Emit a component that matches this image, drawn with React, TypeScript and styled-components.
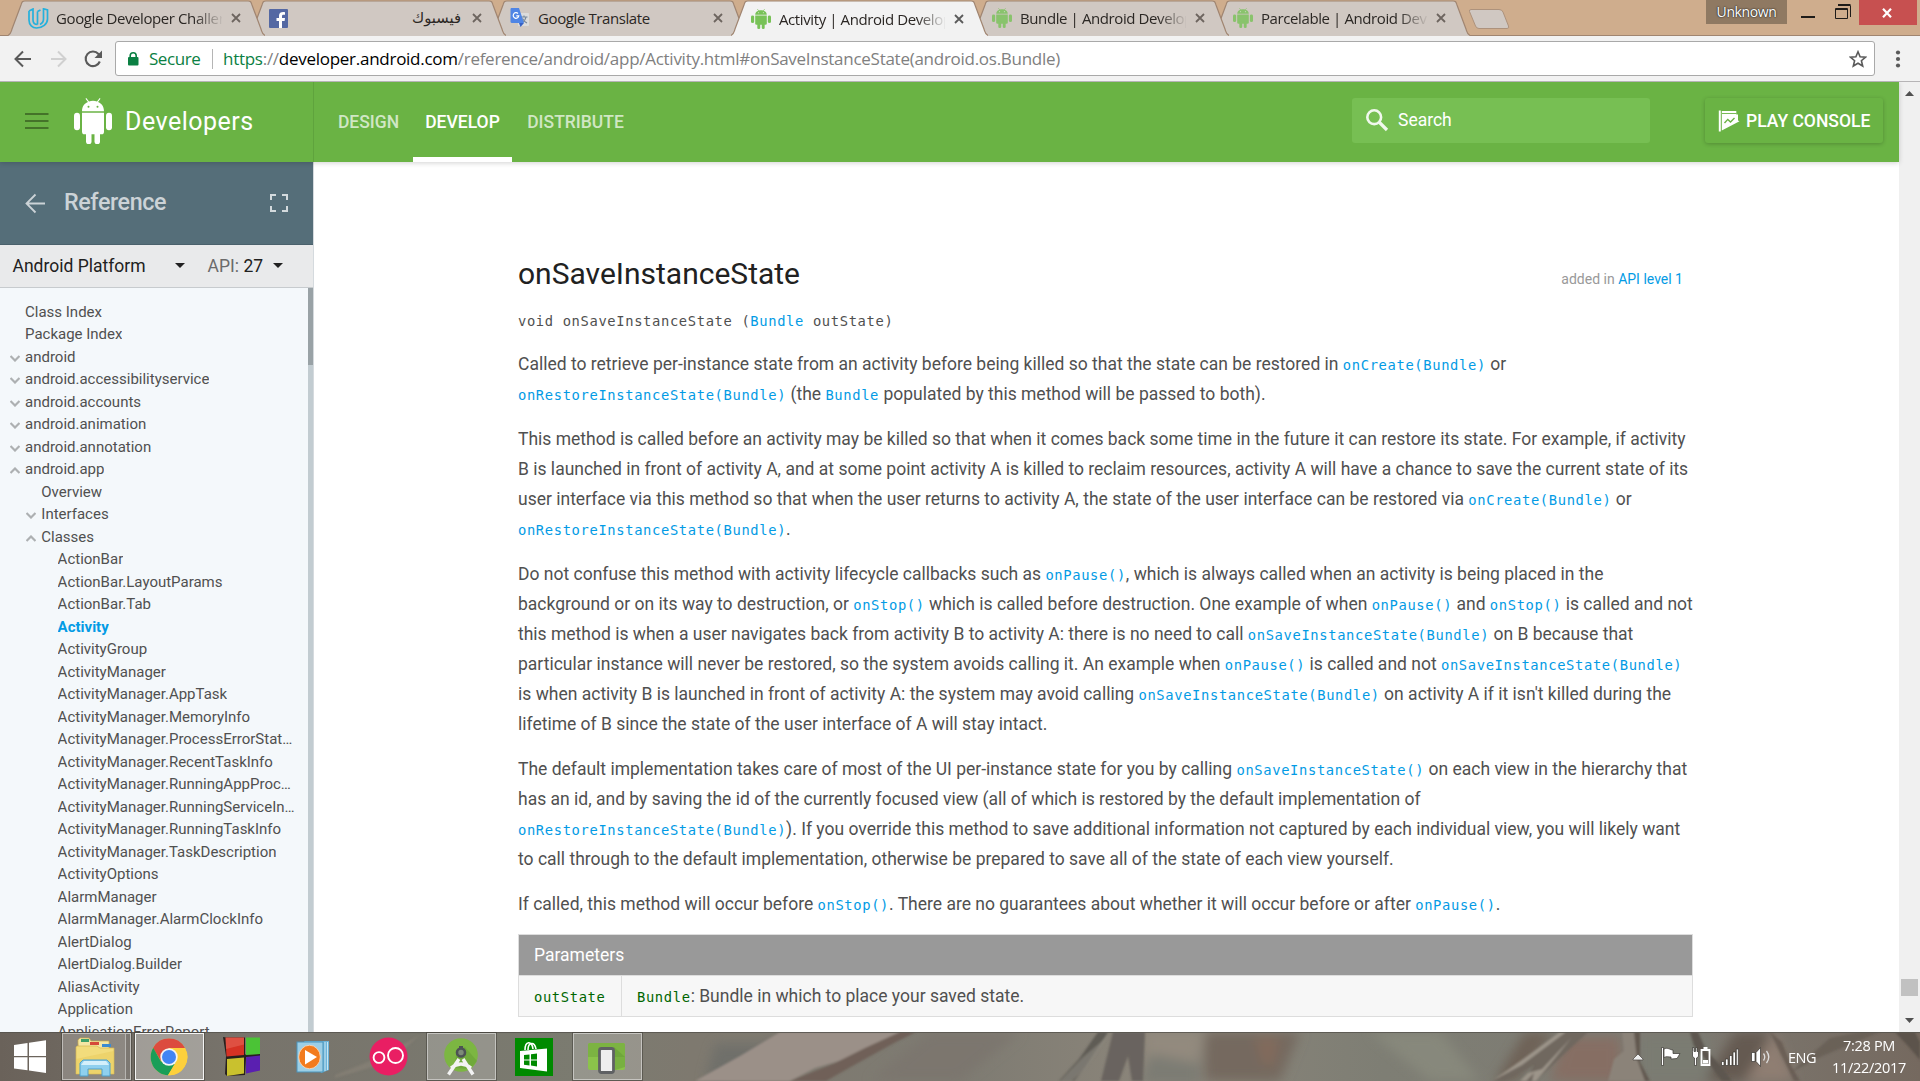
import React from "react";
import styled, { createGlobalStyle, css } from "styled-components";

const ui = `"Open Sans", "Noto Sans", "DejaVu Sans", sans-serif`;
const roboto = `Roboto, "Liberation Sans", sans-serif`;

const GlobalStyle = createGlobalStyle`
  * { box-sizing: border-box; }
  html, body { margin: 0; padding: 0; overflow: hidden; }
  body { font-family: ${roboto}; color: #505050; background: #fff; }
  svg { display: block; flex: none; }
`;

const Screen = styled.div`
  width: 1920px;
  height: 1081px;
  display: flex;
  flex-direction: column;
  overflow: hidden;
`;

/* ---------- browser frame ---------- */

const TabStrip = styled.div`
  height: 36px;
  display: flex;
  align-items: flex-start;
  padding-left: 8px;
  background: #cfad8d;
  border-bottom: 1px solid #a08570;
  font-family: ${ui};
  flex: none;
`;

const TabBox = styled.div<{ $level: number; $active?: boolean }>`
  position: relative;
  z-index: ${(p) => p.$level};
  width: 257px;
  height: ${(p) => (p.$active ? 36 : 35)}px;
  margin-right: -16px;
  padding: 1px 20px 0 20px;
  display: flex;
  align-items: center;
  flex: none;
`;

const TabShape = styled.svg`
  position: absolute;
  left: 0;
  top: 0;
  z-index: -1;
`;

const Favicon = styled.span<{ $faded?: boolean }>`
  width: 21px;
  margin-right: 7px;
  opacity: ${(p) => (p.$faded ? 0.8 : 1)};
`;

const TabTitle = styled.span<{ $rtl?: boolean; $fade?: boolean }>`
  width: 166px;
  overflow: hidden;
  white-space: nowrap;
  font-size: 15px;
  line-height: 22px;
  color: #2b2724;
  letter-spacing: -0.4px;
  ${(p) =>
    p.$rtl &&
    css`
      direction: rtl;
      letter-spacing: 0;
      font-family: "DejaVu Sans", sans-serif;
      padding-right: 2px;
      font-size: 14.8px;
    `}
  ${(p) =>
    p.$fade &&
    css`
      mask-image: linear-gradient(to right, #000 83%, transparent 101%);
    `}
`;

const CloseMark = styled.svg`
  margin-left: 9px;
`;

const NewTab = styled.svg`
  margin: 8px 0 0 13px;
`;

const WindowControls = styled.div`
  margin-left: auto;
  margin-right: 3px;
  display: flex;
  align-items: flex-start;
`;

const Profile = styled.div`
  width: 81px;
  height: 24px;
  background: #8f7962;
  color: #fff;
  font-size: 14px;
  line-height: 23px;
  text-align: center;
  letter-spacing: -0.4px;
  text-shadow: 0 0 2px #222, 0 0 1px #222;
`;

const CloseButton = styled.div`
  width: 58px;
  height: 25px;
  background: #c75050;
  display: flex;
  align-items: center;
  justify-content: center;
  padding-right: 2px;
`;

const AddressRow = styled.div`
  height: 46px;
  flex: none;
  background: #f2f2f2;
  border-bottom: 1px solid #b6b4b6;
  display: flex;
  align-items: center;
`;

const NavButtons = styled.div`
  width: 115px;
  display: flex;
  padding-left: 13px;
  gap: 15px;
`;

const Omnibox = styled.div`
  width: 1760px;
  height: 35px;
  border: 1px solid #a9a9a9;
  border-radius: 3px;
  background: #fff;
  display: flex;
  align-items: center;
  padding: 0 7px 0 11px;
  font-family: ${ui};
  font-size: 17px;
  line-height: 30px;
  white-space: nowrap;
`;

const Secure = styled.span`
  color: #0b8043;
  margin-left: 10px;
  width: 52px;
  letter-spacing: -0.45px;
`;

const Separator = styled.i`
  width: 1px;
  height: 20px;
  background: #b5b5b5;
  margin: 0 10px 0 11px;
`;

const Url = styled.span`
  flex: 1;
  color: #808080;
  letter-spacing: -0.27px;
  em { font-style: normal; color: #0b8043; }
  b { font-weight: 400; color: #000; }
`;

/* ---------- page header ---------- */

const Page = styled.div`
  height: 950px;
  flex: none;
  display: flex;
  overflow: hidden;
`;

const PageBody = styled.div`
  width: 1899px;
  display: flex;
  flex-direction: column;
`;

const Header = styled.header`
  height: 80px;
  flex: none;
  background: #6ab344;
  display: flex;
  position: relative;
  z-index: 2;
  box-shadow: 0 1px 5px rgba(0, 0, 0, 0.18);
`;

const Brand = styled.div`
  width: 314px;
  border-right: 1px solid #5fa33d;
  display: flex;
  align-items: center;
  padding: 0 0 2px 25px;
  color: #fff;
  font-size: 25px;
  letter-spacing: 0.5px;
`;

const BrandName = styled.span`
  margin-left: 13px;
`;

const RobotSlot = styled.span`
  margin-left: 25px;
`;

const Menu = styled.nav`
  display: flex;
  padding-left: 10px;
`;

const MenuItem = styled.a<{ $active?: boolean; $w: number }>`
  width: ${(p) => p.$w}px;
  height: 80px;
  border-bottom: 5px solid ${(p) => (p.$active ? "#fff" : "transparent")};
  color: ${(p) => (p.$active ? "#fff" : "rgba(255,255,255,.7)")};
  font-size: 17.5px;
  font-weight: 500;
  line-height: 81px;
  text-align: center;
`;

const SearchBox = styled.div`
  width: 298px;
  height: 45px;
  margin: 16px 55px 0 auto;
  border-radius: 3px;
  background: #77bf53;
  color: #fff;
  display: flex;
  align-items: center;
  gap: 9px;
  padding: 0 0 2px 13px;
  font-size: 17.5px;
`;

const ConsoleButton = styled.div`
  width: 178px;
  height: 45px;
  margin: 16px 16px 0 0;
  border-radius: 3px;
  box-shadow: 0 1px 4px rgba(0, 0, 0, 0.22);
  color: #fff;
  display: flex;
  align-items: center;
  gap: 6px;
  padding-left: 13px;
  font-size: 17.5px;
  font-weight: 500;
  white-space: nowrap;
`;

/* ---------- sidebar ---------- */

const Columns = styled.div`
  display: flex;
  flex: 1;
  min-height: 0;
`;

const Sidebar = styled.aside`
  width: 314px;
  border-right: 1px solid #d5dade;
  background: #f4f8fb;
  display: flex;
  flex-direction: column;
`;

const SidebarTitle = styled.div`
  height: 83px;
  flex: none;
  background: #556e79;
  border-bottom: 1px solid #4a616c;
  display: flex;
  align-items: center;
  padding: 0 24px 0 25px;
  color: #ccd3d7;
  font-size: 23.3px;
  font-weight: 500;
  span { flex: 1; margin: -3px 0 0 18px; letter-spacing: -0.4px; }
`;

const Selectors = styled.div`
  height: 43px;
  flex: none;
  background: #e9eaeb;
  border-bottom: 1px solid #c7cbce;
  display: flex;
  align-items: center;
  padding: 0 0 1px 12.5px;
  font-size: 17.5px;
  color: #212121;
  white-space: nowrap;
`;

const PlatformLabel = styled.span`
  width: 162px;
`;

const ApiLabel = styled.span`
  width: 36px;
  margin: 1px 0 0 23px;
  color: #6b6b6b;
`;

const ApiValue = styled.span`
  width: 29px;
`;

const TreeArea = styled.div`
  flex: 1;
  min-height: 0;
  display: flex;
  overflow: hidden;
`;

const Tree = styled.ul`
  list-style: none;
  margin: 0;
  padding: 12.5px 0 0;
  width: 308px;
`;

const TreeRow = styled.li<{ $depth: number; $active?: boolean }>`
  height: 22.5px;
  line-height: 22.5px;
  font-size: 15px;
  padding-left: ${(p) => 9 + p.$depth * 16.3}px;
  padding-right: 13px;
  display: flex;
  color: ${(p) => (p.$active ? "#039be5" : "#505050")};
  font-weight: ${(p) => (p.$active ? 700 : 400)};
`;

const TreeText = styled.span`
  overflow: hidden;
  white-space: nowrap;
  text-overflow: ellipsis;
`;

const Chevron = styled.span`
  width: 16px;
  flex: none;
  padding: 9px 0 0 1px;
`;

const TreeTrack = styled.div`
  width: 5px;
  background: #c2ccd1;
`;

const TreeThumb = styled.div`
  height: 77px;
  background: #99a2a6;
`;

/* ---------- article ---------- */

const Main = styled.main`
  flex: 1;
  padding: 0 206px 0 204px;
  display: flex;
  flex-direction: column;
  background: #fff;
`;

const TitleRow = styled.div`
  display: flex;
  justify-content: space-between;
  align-items: baseline;
  margin-top: 89px;
  padding-right: 10px;
  height: 49px;
`;

const Title = styled.h3`
  margin: 0;
  font-weight: 400;
  font-size: 30px;
  line-height: 45px;
  color: #212121;
`;

const Added = styled.div`
  font-size: 14px;
  color: #999;
`;

const Link = styled.a`
  color: #039be5;
`;

const mono = css`
  font-family: "DejaVu Sans Mono", "Liberation Mono", monospace;
  font-size: 13.8px;
  letter-spacing: 0.63px;
  line-height: 1;
`;

const Signature = styled.div`
  ${mono}
  height: 49px;
  padding-top: 15px;
  white-space: pre;
`;

const Para = styled.p`
  margin: 0 0 15px;
  font-size: 17.5px;
  line-height: 30px;
  white-space: nowrap;
`;

const Line = styled.span`
  display: block;
  height: 30px;
`;

const Code = styled.code<{ $green?: boolean }>`
  ${mono}
  color: ${(p) => (p.$green ? "#006600" : "#039be5")};
`;

const Table = styled.div`
  border: 1px solid #ddd;
  background: #f7f7f7;
  font-size: 17.5px;
`;

const TableHead = styled.div`
  height: 41px;
  background: #999;
  color: #fff;
  line-height: 40.5px;
  padding-left: 15px;
  border-bottom: 1px solid #ddd;
`;

const TableRow = styled.div`
  height: 40px;
  line-height: 40px;
  display: flex;
`;

const NameCell = styled.div`
  width: 103px;
  padding-left: 15px;
  border-right: 1px solid #ddd;
`;

const TextCell = styled.div`
  padding-left: 15px;
`;

const Scrollbar = styled.div`
  width: 21px;
  background: #f0f0f0;
  display: flex;
  flex-direction: column;
  align-items: center;
  justify-content: space-between;
  padding: 9px 0 9px;
`;

const ScrollThumb = styled.div`
  width: 17px;
  height: 17px;
  background: #c1c1c1;
  margin: auto 0 22px;
`;

/* ---------- taskbar ---------- */

const Taskbar = styled.footer`
  position: relative;
  z-index: 0;
  height: 49px;
  flex: none;
  display: flex;
  align-items: flex-start;
  gap: 4px;
  background: #7d7970;
  font-family: ${ui};
`;

const Wallpaper = styled.svg`
  position: absolute;
  left: 0;
  top: 0;
  z-index: -1;
`;

const StartButton = styled.div`
  width: 58px;
  height: 48px;
  display: flex;
  align-items: center;
  padding-left: 14px;
`;

const TaskButton = styled.div<{ $state?: "open" | "active"; $nudge?: number }>`
  width: 69px;
  height: 47px;
  margin-top: 1px;
  padding-right: ${(p) => p.$nudge ?? 0}px;
  display: flex;
  align-items: center;
  justify-content: center;
  border: 1px solid transparent;
  ${(p) =>
    p.$state === "open" &&
    css`
      border-color: rgba(255, 255, 255, 0.45);
      background: rgba(255, 255, 255, 0.2);
      box-shadow: 0 0 0 1px rgba(60, 58, 52, 0.5);
    `}
  ${(p) =>
    p.$state === "active" &&
    css`
      border-color: #f4f4f3;
      background: rgba(255, 255, 255, 0.33);
      box-shadow: 0 0 0 1px rgba(60, 58, 52, 0.5);
    `}
`;

const StackEdge = styled.i`
  height: 45px;
  width: 5px;
  margin-left: auto;
  border-left: 1px solid rgba(255, 255, 255, 0.45);
  background: rgba(70, 66, 60, 0.22);
`;

const StackIcon = styled.span`
  margin-left: 12px;
`;

const Tray = styled.div`
  margin-left: auto;
  height: 49px;
  display: flex;
  align-items: center;
  padding: 1px 13px 0 0;
  color: #fff;
  font-size: 14.5px;
`;

const Lang = styled.span`
  width: 31px;
  margin: 0 12px 0 16px;
  letter-spacing: -0.5px;
`;

const Clock = styled.div`
  width: 76px;
  text-align: center;
  line-height: 22px;
  letter-spacing: -0.3px;
  white-space: nowrap;
`;

/* ---------- icons ---------- */

const Robot = ({ w, h, color, eye }: { w: number; h: number; color: string; eye: string }) => (
  <svg width={w} height={h} viewBox="0 0 38 45" preserveAspectRatio="none" fill={color}>
    <path d="M8 13C8 8 11 5 14 4L11.5.8l.8-.7L15 3.400c2.600-.9 5.400-.9 8 0L25.700.1l.8.7L24 4c3 1 6 4 6 9z" />
    <path d="M8 14.500h22V33q0 2.500-2.500 2.500h-17Q8 35.500 8 33z" />
    <rect x="0" y="14.500" width="6" height="17" rx="3" />
    <rect x="32" y="14.500" width="6" height="17" rx="3" />
    <rect x="12" y="30" width="5.500" height="15" rx="2.500" />
    <rect x="20.500" y="30" width="5.500" height="15" rx="2.500" />
    <circle cx="14.500" cy="8.500" r="1" fill={eye} />
    <circle cx="23.500" cy="8.500" r="1" fill={eye} />
  </svg>
);

const Udacity = () => (
  <svg width="21" height="21" viewBox="0 0 21 21" fill="none" stroke="#25b0dc" strokeWidth="1.700">
    <path d="M1 3l4-2v11c0 3 2 4.500 4.500 4.500M1 3v9c0 5 3.500 8 7.500 8 6 0 11-4 11-9V2l-4-1.200V11c0 2.500-1.500 4.500-3.500 5.500M9.500 3.500l3-1.500M9.500 3.500v13" />
  </svg>
);

const Facebook = () => (
  <svg width="19" height="19" viewBox="0 0 19 19">
    <rect width="19" height="19" rx="1" fill="#5468a3" />
    <path d="M13 19v-7h2.600l.4-3H13V7.300c0-1 .4-1.500 1.500-1.500H16V3.200C13 2.600 10 3.300 10 6.800V9H7.500v3H10v7z" fill="#fff" />
  </svg>
);

const Translate = () => (
  <svg width="20" height="20" viewBox="0 0 20 20">
    <rect x="8" y="5" width="11" height="13" rx="1" fill="#dcdcdc" />
    <path d="M11 9h6.500M14 7.500V9m2 0c-.5 2.500-2 4.500-4 5.500m.500-4c1 2 2.500 3.500 4.500 4.500" stroke="#75869a" strokeWidth="1.100" fill="none" />
    <path d="M1 0h8l5 15H2a1.500 1.500 0 0 1-1.500-1.500V1z" fill="#4f85e5" />
    <path d="M9 15h5l-3.500 4z" fill="#3661c4" />
    <path d="M8 5.500A2.800 2.800 0 1 0 8.800 7.800H6.300" stroke="#fff" strokeWidth="1.200" fill="none" />
  </svg>
);

const Caret = () => (
  <svg width="10" height="5" viewBox="0 0 10 5" fill="#212121"><path d="M0 0h10L5 5z" /></svg>
);

const Tab = ({ icon, title, active, rtl, fade, level, faded }: {
  icon: React.ReactNode; title: string; active?: boolean; rtl?: boolean; fade?: boolean; level: number; faded?: boolean;
}) => (
  <TabBox $level={level} $active={active}>
    <TabShape width="257" height="36">
      <path d="M0 35.500C3 34 3 32 4 29L13 5C14 2 14 1 17 1H240C243 1 243 2 244 5L253 29C254 32 254 34 257 35.500V36H0z" fill={active ? "#f2f2f2" : "#d0c8c2"} />
      <path d="M0 35.500C3 34 3 32 4 29L13 5C14 2 14 1 17 1H240C243 1 243 2 244 5L253 29C254 32 254 34 257 35.500" fill="none" stroke="#a08571" strokeWidth="1.200" />
    </TabShape>
    <Favicon $faded={faded}>{icon}</Favicon>
    <TabTitle $rtl={rtl} $fade={fade}>{title}</TabTitle>
    <CloseMark width="10" height="10" viewBox="0 0 10 10" stroke={active ? "#5a5a5a" : "#6d655f"} strokeWidth="1.800">
      <path d="M1 1l8 8M9 1L1 9" />
    </CloseMark>
  </TabBox>
);

/* ---------- data ---------- */

type Node = { label: string; depth: number; open?: boolean; active?: boolean };

const tree: Node[] = [
  { label: "Class Index", depth: 0 },
  { label: "Package Index", depth: 0 },
  { label: "android", depth: 0, open: false },
  { label: "android.accessibilityservice", depth: 0, open: false },
  { label: "android.accounts", depth: 0, open: false },
  { label: "android.animation", depth: 0, open: false },
  { label: "android.annotation", depth: 0, open: false },
  { label: "android.app", depth: 0, open: true },
  { label: "Overview", depth: 1 },
  { label: "Interfaces", depth: 1, open: false },
  { label: "Classes", depth: 1, open: true },
  ...[
    "ActionBar", "ActionBar.LayoutParams", "ActionBar.Tab", "Activity", "ActivityGroup", "ActivityManager",
    "ActivityManager.AppTask", "ActivityManager.MemoryInfo", "ActivityManager.ProcessErrorStateInfo",
    "ActivityManager.RecentTaskInfo", "ActivityManager.RunningAppProcessInfo",
    "ActivityManager.RunningServiceInfo", "ActivityManager.RunningTaskInfo",
    "ActivityManager.TaskDescription", "ActivityOptions", "AlarmManager", "AlarmManager.AlarmClockInfo",
    "AlertDialog", "AlertDialog.Builder", "AliasActivity", "Application", "ApplicationErrorReport",
  ].map((label) => ({ label, depth: 2, active: label === "Activity" })),
];

/* Backquoted pieces of a line are code links. */
const paragraphs: string[][] = [
  [
    "Called to retrieve per-instance state from an activity before being killed so that the state can be restored in `onCreate(Bundle)` or",
    "`onRestoreInstanceState(Bundle)` (the `Bundle` populated by this method will be passed to both).",
  ],
  [
    "This method is called before an activity may be killed so that when it comes back some time in the future it can restore its state. For example, if activity",
    "B is launched in front of activity A, and at some point activity A is killed to reclaim resources, activity A will have a chance to save the current state of its",
    "user interface via this method so that when the user returns to activity A, the state of the user interface can be restored via `onCreate(Bundle)` or",
    "`onRestoreInstanceState(Bundle)`.",
  ],
  [
    "Do not confuse this method with activity lifecycle callbacks such as `onPause()`, which is always called when an activity is being placed in the",
    "background or on its way to destruction, or `onStop()` which is called before destruction. One example of when `onPause()` and `onStop()` is called and not",
    "this method is when a user navigates back from activity B to activity A: there is no need to call `onSaveInstanceState(Bundle)` on B because that",
    "particular instance will never be restored, so the system avoids calling it. An example when `onPause()` is called and not `onSaveInstanceState(Bundle)`",
    "is when activity B is launched in front of activity A: the system may avoid calling `onSaveInstanceState(Bundle)` on activity A if it isn't killed during the",
    "lifetime of B since the state of the user interface of A will stay intact.",
  ],
  [
    "The default implementation takes care of most of the UI per-instance state for you by calling `onSaveInstanceState()` on each view in the hierarchy that",
    "has an id, and by saving the id of the currently focused view (all of which is restored by the default implementation of",
    "`onRestoreInstanceState(Bundle)`). If you override this method to save additional information not captured by each individual view, you will likely want",
    "to call through to the default implementation, otherwise be prepared to save all of the state of each view yourself.",
  ],
  [
    "If called, this method will occur before `onStop()`. There are no guarantees about whether it will occur before or after `onPause()`.",
  ],
];

const renderLine = (line: string) =>
  line.split("`").map((part, i) => (i % 2 ? <Code key={i}>{part}</Code> : part));

export default function App() {
  return (
    <Screen>
      <GlobalStyle />
      <TabStrip>
        <Tab level={6} icon={<Udacity />} title="Google Developer Challenge" fade />
        <Tab level={5} icon={<Facebook />} title="فيسبوك" rtl />
        <Tab level={4} icon={<Translate />} title="Google Translate" />
        <Tab level={9} icon={<Robot w={20} h={20} color="#78c257" eye="#fff" />} title="Activity | Android Developers" active fade />
        <Tab level={3} icon={<Robot w={20} h={20} color="#78c257" eye="#fff" />} title="Bundle | Android Developers" fade faded />
        <Tab level={2} icon={<Robot w={20} h={20} color="#78c257" eye="#fff" />} title="Parcelable | Android Developers" fade faded />
        <NewTab width="44" height="22" viewBox="0 0 44 22">
          <path d="M3 1.500H31Q34 1.500 35 4L40.500 18Q41.500 20.500 39 20.500H11Q8.500 20.500 7.500 18L1.500 3.500Q1 1.500 3 1.500z" transform="translate(1 0)" fill="#d0c8c2" stroke="#ad927c" />
        </NewTab>
        <WindowControls>
          <Profile>Unknown</Profile>
          <svg width="72" height="26" viewBox="0 0 72 26" fill="none" stroke="#1f1c19">
            <path d="M14 17h14" strokeWidth="2" />
            <path d="M48.500 8.500h12v10h-12zM48.500 9.500h12M51 5.500h12.500V17M51 4.500h12.500" />
          </svg>
          <CloseButton>
            <svg width="10" height="10" viewBox="0 0 10 10" stroke="#fff" strokeWidth="2.200"><path d="M1 .8l8 8.400M9 .8L1 9.200" /></svg>
          </CloseButton>
        </WindowControls>
      </TabStrip>

      <AddressRow>
        <NavButtons>
          <svg width="20" height="20" viewBox="0 0 20 20" fill="none" stroke="#5a5a5a" strokeWidth="2"><path d="M18 10H3M10 2.500L2.500 10l7.500 7.500" /></svg>
          <svg width="20" height="20" viewBox="0 0 20 20" fill="none" stroke="#d0d0d0" strokeWidth="2"><path d="M3 10h14M10 2.500l7.500 7.500-7.500 7.500" /></svg>
          <svg width="20" height="20" viewBox="0 0 20 20" fill="none" stroke="#5a5a5a" strokeWidth="2.100">
            <path d="M16.800 12.500A7.300 7.300 0 1 1 15.500 5L17 6.800" /><path d="M19 1.500V9h-7.500z" fill="#5a5a5a" stroke="none" />
          </svg>
        </NavButtons>
        <Omnibox>
          <svg width="12" height="14" viewBox="0 0 12 14"><rect x="1" y="5" width="10.500" height="8.500" rx="1" fill="#0b8043" /><path d="M3.200 5.500V3.800a3 3 0 0 1 6 0v1.700" fill="none" stroke="#0b8043" strokeWidth="1.600" /></svg>
          <Secure>Secure</Secure>
          <Separator />
          <Url><em>https</em>://<b>developer.android.com</b>/reference/android/app/Activity.html#onSaveInstanceState(android.os.Bundle)</Url>
          <svg width="18" height="18" viewBox="0 0 18 18" fill="none" stroke="#5a5a5a" strokeWidth="1.600"><path d="M9 1.800l2.100 5 5.400.4-4.100 3.500 1.300 5.300L9 13.200 4.300 16l1.300-5.300L1.500 7.200l5.400-.4z" /></svg>
        </Omnibox>
        <svg width="45" height="22" viewBox="0 0 45 22" fill="#5a5a5a"><circle cx="23" cy="4.500" r="2.100" /><circle cx="23" cy="11" r="2.100" /><circle cx="23" cy="17.500" r="2.100" /></svg>
      </AddressRow>

      <Page>
        <PageBody>
          <Header>
            <Brand>
              <svg width="24" height="16" viewBox="0 0 24 16" stroke="#447329" strokeWidth="2"><path d="M0 1h23.500M0 8h23.500M0 15h23.500" /></svg>
              <RobotSlot><Robot w={38} h={46} color="#fff" eye="#6ab344" /></RobotSlot>
              <BrandName>Developers</BrandName>
            </Brand>
            <Menu>
              <MenuItem $w={89}>DESIGN</MenuItem>
              <MenuItem $w={99} $active>DEVELOP</MenuItem>
              <MenuItem $w={127}>DISTRIBUTE</MenuItem>
            </Menu>
            <SearchBox>
              <svg width="24" height="24" viewBox="0 0 24 24" fill="none" stroke="#f1f8ee" strokeWidth="2.600"><circle cx="9.200" cy="9.200" r="6.900" /><path d="M14 14l8 8" strokeWidth="3.200" /></svg>
              Search
            </SearchBox>
            <ConsoleButton>
              <svg width="22" height="22" viewBox="0 0 22 22">
                <path d="M1.800 .5v21" stroke="#fff" strokeWidth="2" />
                <path d="M3.800 1h14.500v3.600H20v5.900l1.500.8L3.800 20.500z" fill="#fff" />
                <path d="M4 3.500h14.500" stroke="#6ab344" strokeWidth=".9" /><path d="M6.500 13l3.300-3.600 2.700 2.600 4-4" stroke="#6ab344" strokeWidth="1.400" fill="none" />
              </svg>
              PLAY CONSOLE
            </ConsoleButton>
          </Header>

          <Columns>
            <Sidebar>
              <SidebarTitle>
                <svg width="21" height="21" viewBox="0 0 21 21" fill="none" stroke="#ccd3d7" strokeWidth="1.800"><path d="M20 10.500H2M10.500 1.500l-9 9 9 9" /></svg>
                <span>Reference</span>
                <svg width="20" height="20" viewBox="0 0 20 20" fill="none" stroke="#d3dadd" strokeWidth="2"><path d="M2 7V2h5M13 2h5v5M18 13v5h-5M7 18H2v-5" /></svg>
              </SidebarTitle>
              <Selectors>
                <PlatformLabel>Android Platform</PlatformLabel>
                <Caret />
                <ApiLabel>API:</ApiLabel>
                <ApiValue>27</ApiValue>
                <Caret />
              </Selectors>
              <TreeArea>
                <Tree>
                  {tree.map((n) => (
                    <TreeRow key={n.label} $depth={n.depth} $active={n.active}>
                      <Chevron>
                        {n.open !== undefined && (
                          <svg width="10" height="7" viewBox="0 0 10 7" fill="none" stroke="#adb0b2" strokeWidth="2.200">
                            <path d={n.open ? "M.5 6L5 1.500 9.500 6" : "M.5 1L5 5.500 9.500 1"} />
                          </svg>
                        )}
                      </Chevron>
                      <TreeText>{n.label}</TreeText>
                    </TreeRow>
                  ))}
                </Tree>
                <TreeTrack><TreeThumb /></TreeTrack>
              </TreeArea>
            </Sidebar>

            <Main>
              <TitleRow>
                <Title>onSaveInstanceState</Title>
                <Added>added in <Link>API level 1</Link></Added>
              </TitleRow>
              <Signature>void onSaveInstanceState (<Link>Bundle</Link> outState)</Signature>
              {paragraphs.map((lines, i) => (
                <Para key={i}>
                  {lines.map((line, j) => (
                    <Line key={j}>{renderLine(line)}</Line>
                  ))}
                </Para>
              ))}
              <Table>
                <TableHead>Parameters</TableHead>
                <TableRow>
                  <NameCell><Code $green>outState</Code></NameCell>
                  <TextCell><Code $green>Bundle</Code>: Bundle in which to place your saved state.</TextCell>
                </TableRow>
              </Table>
            </Main>
          </Columns>
        </PageBody>
        <Scrollbar>
          <svg width="9" height="5" viewBox="0 0 9 5" fill="#505050"><path d="M0 5h9L4.500 0z" /></svg>
          <ScrollThumb />
          <svg width="9" height="5" viewBox="0 0 9 5" fill="#505050"><path d="M0 0h9L4.500 5z" /></svg>
        </Scrollbar>
      </Page>

      <Taskbar>
        <Wallpaper width="1920" height="49" viewBox="0 0 1920 49">
          <defs>
            <filter id="soft" x="-20%" y="-40%" width="140%" height="180%"><feGaussianBlur stdDeviation="6" /></filter>
            <filter id="fine" x="-5%" y="-20%" width="110%" height="140%"><feGaussianBlur stdDeviation="0.900" /></filter>
            <linearGradient id="base">
              <stop offset="0" stopColor="#6a625a" /><stop offset=".12" stopColor="#77736b" /><stop offset=".3" stopColor="#7b7b70" />
              <stop offset=".36" stopColor="#7e796f" /><stop offset=".5" stopColor="#7e7b72" /><stop offset=".6" stopColor="#8b857a" />
              <stop offset=".72" stopColor="#7e7e74" /><stop offset=".87" stopColor="#7d7a72" /><stop offset="1" stopColor="#75695f" />
            </linearGradient>
          </defs>
          <rect width="1920" height="49" fill="url(#base)" />
          <g filter="url(#soft)">
            <path d="M715 12h60l-20 20-30 17h-20z" fill="#70706a" />
            <path d="M930 0h90l-60 49h-90z" fill="#7b766e" />
            <path d="M1145 0h60l-15 49h-45z" fill="#938a7e" />
            <path d="M1150 22l50 10v20h-60z" fill="#7c7c73" />
            <path d="M1205 0h95l-20 49h-75z" fill="#74695f" />
            <path d="M1255 5l24 0-5 28h-12z" fill="#826a5c" />
            <path d="M1370 0h70l40 49h-50z" fill="#87887c" />
            <path d="M1525 0h30l-40 49h-20z" fill="#6e6257" />
            <path d="M1565 5h55v44h-70z" fill="#866e63" />
            <path d="M1640 4h70v45h-70z" fill="#7a7b72" />
            <path d="M1735 0h35l-20 49h-45z" fill="#655a51" />
            <path d="M1775 0l20 49h-50z" fill="#8f7e72" />
          </g>
          <g filter="url(#fine)">
            <path d="M695 49L740 24 780 0H915L870 20 815 36 790 49z" fill="#9b9088" />
            <path d="M335 43l45-18 40-22-30 27-55 16z" fill="#8b8478" opacity=".6" />
            <path d="M790 49l20-8 25-10 30-15 35-16h16l-20 10-40 22-30 17z" fill="#706158" />
            <path d="M1098 0h10l-22 34-12 15h-15l20-22z" fill="#5e5b55" />
            <path d="M1108 4l-22 32-14 13h-12l22-23z" fill="#8e8a80" opacity=".6" />
            <path d="M1113 0h32l-2 49h-11l-4-25-9 25h-18z" fill="#69635e" />
            <path d="M1492 49l34-20 38-29h24l-28 26-24 23h-10l8-16-30 16z" fill="#6f675f" />
            <path d="M1492 49l30-16 44-33h-6l-34 25-34 24zM1520 49l8-8 14-4 30-32-16 20-20 24h-4l2-8-8 8z" fill="#9d958a" />
            <path d="M1622 0h14l2 28 8 21h-38l6-22 10-8z" fill="#8b8379" />
            <path d="M1634 0h6v30l10 19h-5l-8-22z" fill="#625950" />
            <path d="M1690 0h8l8 18 14 15 12 16h-10l-14-19-14-16z" fill="#5d574f" />
            <path d="M1770 0l12 10 10 25 8 14h-6z" fill="#61564c" opacity=".7" />
            <path d="M1895 0h20l5 10v18l-12-14z" fill="#5c534b" />
            <path d="M1830 6l30-6h20l-60 25-30 16z" fill="#645b53" opacity=".7" />
          </g>
          <rect width="1920" height="1" fill="#55534c" opacity=".8" />
        </Wallpaper>
        <StartButton>
          <svg width="32" height="33" viewBox="0 0 32 33" fill="#fff"><path d="M0 5l13.500-2v13H0zM15 2.700L32 .3V16H15zM0 17.300h13.500v13L0 28.400zM15 17.300h17V33l-17-2.500z" /></svg>
        </StartButton>
        <TaskButton $state="open">
          <StackIcon>
            <svg width="40" height="40" viewBox="0 0 40 40">
              <path d="M3 6V3l2-2h9l2 3h18v20H4z" fill="#f4e6a4" stroke="#c9a94b" strokeWidth=".7" />
              <rect x="6" y="2" width="8" height="3" fill="#3fa06a" /><rect x="15" y="5" width="9" height="3" fill="#d6493a" /><rect x="27" y="7" width="9" height="3" fill="#3b8bd0" />
              <path d="M1 10l1-1h20l3 2h14v26H1z" fill="#f2dc7c" stroke="#d4b655" strokeWidth=".7" />
              <path d="M1 22l38-8v23H1z" fill="#e7c95a" opacity=".5" />
              <path d="M5 39V26l3-3h24l3 3v13h-8v-7H13v7z" fill="#8fd0ee" stroke="#4fa0cb" />
              <path d="M6 28l3-4h22l3 4z" fill="#d4f0fb" />
            </svg>
          </StackIcon>
          <StackEdge />
        </TaskButton>
        <TaskButton $state="active" $nudge={1}>
          <svg width="38" height="38" viewBox="0 0 38 38">
            <circle cx="19" cy="19" r="18.300" fill="#fdd03c" />
            <path d="M3 10A18.300 18.300 0 0 1 35 10H19L11 23z" fill="#dc4b3e" />
            <path d="M3.200 9.700A18.300 18.300 0 0 0 18 37.300L26 23.500H11z" fill="#1a9e58" />
            <path d="M19 10h16a18.300 18.300 0 0 1-17 27.300L27 23z" fill="#fdd03c" />
            <circle cx="19" cy="19" r="8.700" fill="#f4f4f4" /><circle cx="19" cy="19" r="7" fill="#4285f4" />
          </svg>
        </TaskButton>
        <TaskButton $nudge={1}>
          <svg width="38" height="40" viewBox="0 0 38 40">
            <path d="M0 0l3 .5H22v17L37 17v3l-14 1-1 17-18 1-2-2 1-18z" fill="#26201e" />
            <path d="M2.500 .5H21v17.500L3.500 19.500z" fill="#d63224" /><path d="M23 .5h14v16.500l-14 1z" fill="#4bc336" />
            <path d="M4 22l17-1.500v16L4 39z" fill="#c9c12e" /><path d="M23 20l14-1.500v15l-14 3z" fill="#5a1fb0" />
            <path d="M2.500 .5H21v7L3 12z" fill="#f08a7a" opacity=".35" />
          </svg>
        </TaskButton>
        <TaskButton $nudge={5}>
          <svg width="34" height="34" viewBox="0 0 34 34">
            <path d="M8 1h25v29l-8 3z" fill="#6db4d8" /><path d="M29 2v29M31.500 2v28" stroke="#c8e6f3" />
            <rect x="1" y="2" width="26" height="30" fill="#9ccfe6" stroke="#4b94bb" />
            <ellipse cx="13.500" cy="17" rx="10.800" ry="11.800" fill="#f27b1e" stroke="#fbe0c6" strokeWidth=".8" /><path d="M9 10l12 7-12 7.500z" fill="#fff" />
          </svg>
        </TaskButton>
        <TaskButton $nudge={1}>
          <svg width="39" height="39" viewBox="0 0 39 39" fill="none" stroke="#fff" strokeWidth="1.900">
            <circle cx="19.500" cy="19.500" r="19" fill="#e91e63" stroke="none" /><circle cx="10" cy="20.500" r="5.400" /><circle cx="26.500" cy="18.500" r="7.500" />
          </svg>
        </TaskButton>
        <TaskButton $state="open" $nudge={1}>
          <svg width="36" height="38" viewBox="0 0 36 38">
            <circle cx="18" cy="17" r="16.800" fill="#7cb642" /><path d="M14 12l-3 18 16 1 7-8-12-14z" fill="#5f9632" opacity=".4" />
            <path d="M16 21L5.500 36.500M20 21l10 15.500M8 30q10-8 20 0" stroke="#f3f3f3" strokeWidth="3.400" fill="none" />
            <circle cx="18" cy="14.500" r="4" fill="#7d8b78" stroke="#4d5254" strokeWidth="2.600" /><path d="M16 8h4v3h-4z" fill="#4d5254" />
          </svg>
        </TaskButton>
        <TaskButton $nudge={1}>
          <svg width="38" height="38" viewBox="0 0 38 38">
            <rect width="38" height="38" fill="#008a00" />
            <path d="M5 13l27-2.500v23L5 30z" fill="#fff" />
            <path d="M10 12c0-9 7-10 8-1M13 12c0-8 7-9 8-1" stroke="#fff" strokeWidth="1.600" fill="none" />
            <path d="M9 17l5.500-.6v5H9zM16 16.200l6-.7v6h-6zM9 22.600h5.500v4.800L9 26.800zM16 22.600h6v5.800l-6-.8z" fill="#008a00" />
          </svg>
        </TaskButton>
        <TaskButton $state="open" $nudge={1}>
          <svg width="38" height="38" viewBox="0 0 38 38">
            <rect x="0" y="5" width="37" height="27" rx="2" fill="#8bc34a" /><path d="M0 7q0-2 2-2h33q2 0 2 2v12H0z" fill="#7cb342" />
            <path d="M26 9l11 10v10l-10 3z" fill="#5c9432" opacity=".4" />
            <rect x="11.500" y="10.500" width="14" height="24" rx="2" fill="#eee" stroke="#5f6163" strokeWidth="2.800" />
          </svg>
        </TaskButton>
        <Tray>
          <svg width="140" height="22" viewBox="0 0 140 22">
            <path d="M1 13l5-5 5 5v1H1z" fill="#eee" stroke="#55524c" strokeWidth=".8" />
            <g stroke="#36332f" strokeWidth=".7" fill="#fff">
              <path d="M29.500 1.500h2v18h-2z" /><path d="M32 3c4-2 6 1 9 1v3.500h7l-3 5-6 .5v-2c-3 0-4-1-7 .5z" />
              <path d="M60.500 1.500H62v4h1.500v-4H65v4h1.500v5l-2 1.500v7.500h-2V12l-2-1.500v-5h0z" />
              <path d="M89.500 15.500H92v4h-2.500zM93.500 13H96v6.500h-2.500zM97.500 9.500h2.500v10h-2.500zM101 6h2.500v13.500H101zM104.300 3h2v16.500h-2z" />
              <path d="M119.500 6.500h3.500V15.500h-3.500zM124 6.500l4.500-5v19l-4.500-5z" />
            </g>
            <path d="M69.500 4h8v15h-8zM71.500 2h4" fill="none" stroke="#fff" strokeWidth="1.800" /><path d="M71 14h5v3.500h-5z" fill="#fff" />
            <path d="M131.500 7.500q2.500 3.500 0 7M134.500 5q4.500 6 0 12" stroke="#ddd" fill="none" strokeWidth="1.300" />
          </svg>
          <Lang>ENG</Lang>
          <Clock>7:28 PM<br />11/22/2017</Clock>
        </Tray>
      </Taskbar>
    </Screen>
  );
}
